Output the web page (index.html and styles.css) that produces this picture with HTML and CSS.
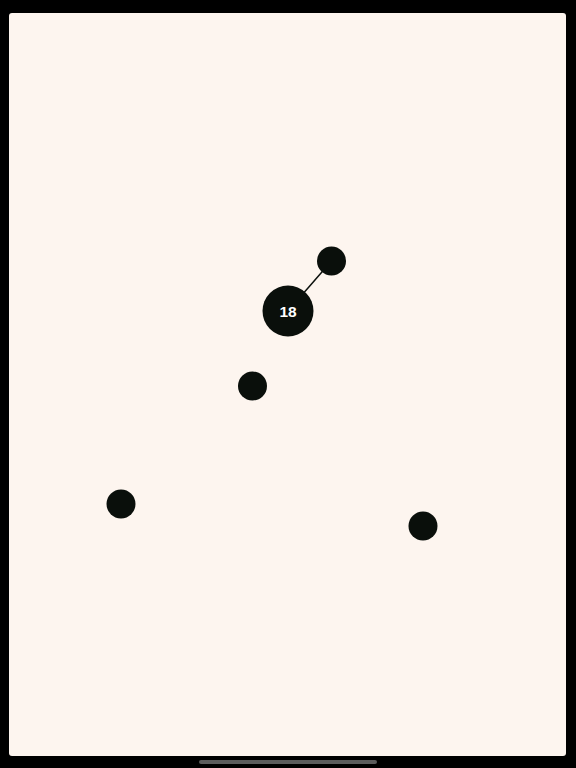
FILE: index.html
```html
<!DOCTYPE html>
<html lang="en">
<head>
<meta charset="utf-8">
<title>Graph</title>
<link rel="stylesheet" href="styles.css">
</head>
<body>
<div class="screen">
  <main class="card">
    <svg class="graph" viewBox="9 13 557 743" width="557" height="743" xmlns="http://www.w3.org/2000/svg">
      <line x1="288" y1="311" x2="331.5" y2="261" class="edge"/>
      <circle cx="331.5" cy="261" r="14.5" class="node"/>
      <circle cx="288" cy="311" r="25.5" class="node"/>
      <text x="288" y="316.8" class="label">18</text>
      <circle cx="252.5" cy="386" r="14.5" class="node"/>
      <circle cx="121" cy="504" r="14.5" class="node"/>
      <circle cx="423" cy="526" r="14.5" class="node"/>
    </svg>
  </main>
  <div class="home-indicator"></div>
</div>
</body>
</html>
```

FILE: styles.css
```css
html, body {
  margin: 0;
  padding: 0;
  background: #000;
  font-family: "Liberation Sans", Arial, sans-serif;
}
.screen {
  width: 576px;
  height: 768px;
  overflow: hidden;
  display: flex;
  flex-direction: column;
  background: #000;
}
.card {
  margin: 13px 10px 0 9px;
  width: 557px;
  height: 743px;
  background: #fdf5ef;
  border-radius: 3px;
  overflow: hidden;
}
.graph {
  display: block;
}
.edge {
  stroke: #0b100c;
  stroke-width: 1.5;
}
.node {
  fill: #0a0f0b;
}
.label {
  fill: #ffffff;
  font-family: "Liberation Sans", Arial, sans-serif;
  font-weight: 700;
  font-size: 15.5px;
  text-anchor: middle;
}
.home-indicator {
  margin: 4px 0 0 199px;
  width: 178px;
  height: 4px;
  border-radius: 2px;
  background: #5c5c5c;
}
```
